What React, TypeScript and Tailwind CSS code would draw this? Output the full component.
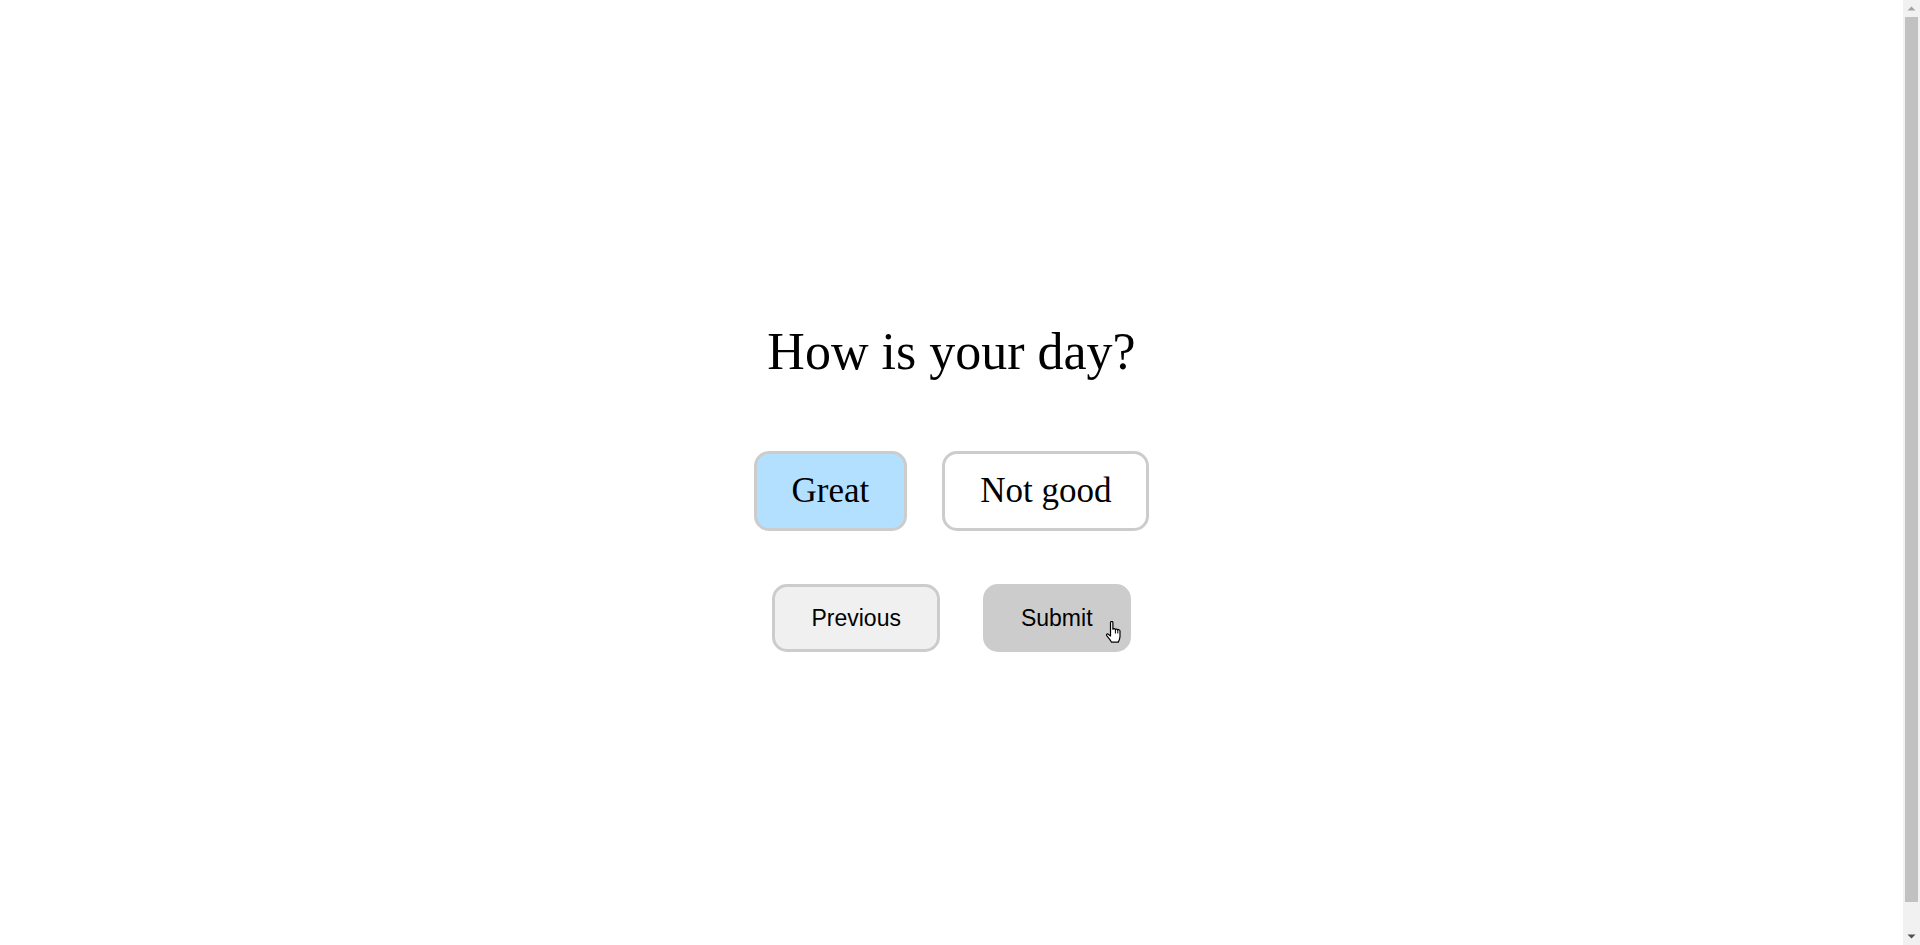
import React from "react";

function HandCursor() {
  return (
    <svg
      width="18"
      height="24"
      viewBox="0 0 18 24"
      className="absolute pointer-events-none"
      style={{ left: 119, top: 34 }}
    >
      <path
        d="M5.5 1.8 C5.5 0.9 6.1 0.5 6.7 0.5 C7.3 0.5 7.9 0.9 7.9 1.8 V8.2 C8.3 7.3 10.2 7.3 10.4 8.6 C10.7 7.8 12.6 7.8 12.8 9.1 C13.1 8.4 15 8.5 15 10.1 V15.6 C15 18 14 19.6 13.2 21.2 H6.6 C5.6 19.6 3.4 16.6 1.9 14.9 C1.1 13.9 1.9 12.4 3.1 13.1 L5.5 15 Z"
        fill="white"
        stroke="black"
        strokeWidth="1.2"
        strokeLinejoin="round"
      />
      <path d="M10.4 8.6 V12.5 M12.8 9.1 V12.5" stroke="black" strokeWidth="1" fill="none" />
    </svg>
  );
}

function Scrollbar() {
  return (
    <div className="w-[17px] h-[945px] bg-[#f1f1f1] flex flex-col shrink-0">
      <div className="h-[17px] flex items-center justify-center">
        <svg width="9" height="5" viewBox="0 0 9 5">
          <path d="M0.5 4.5 L4.5 0.5 L8.5 4.5 Z" fill="#a3a3a3" />
        </svg>
      </div>
      <div className="flex-1 px-[2px] pb-[26px]">
        <div className="h-full bg-[#c1c1c1]" />
      </div>
      <div className="h-[17px] flex items-center justify-center">
        <svg width="9" height="5" viewBox="0 0 9 5">
          <path d="M0.5 0.5 L8.5 0.5 L4.5 4.5 Z" fill="#505050" />
        </svg>
      </div>
    </div>
  );
}

export default function App() {
  return (
    <div className="h-[945px] w-full bg-white flex overflow-hidden">
      <main className="flex-1 pt-[29px] flex flex-col items-center justify-center">
        <h1
          className="text-[52px] leading-[1.15] text-black font-normal"
          style={{ fontFamily: '"Liberation Serif", "Times New Roman", serif' }}
        >
          How is your day?
        </h1>
        <div
          className="mt-[69px] flex gap-[35px]"
          style={{ fontFamily: '"Liberation Serif", "Times New Roman", serif' }}
        >
          <button className="border-[3px] border-[#cccccc] bg-[#b3e0ff] rounded-[15px] px-[35px] py-[17px] text-[35px] leading-[40px] text-black">
            Great
          </button>
          <button className="border-[3px] border-[#cccccc] bg-white rounded-[15px] px-[35px] py-[17px] text-[35px] leading-[40px] text-black">
            Not good
          </button>
        </div>
        <div
          className="mt-[53px] flex gap-[43px]"
          style={{ fontFamily: '"Liberation Sans", Arial, sans-serif' }}
        >
          <button className="border-[3px] border-[#cccccc] bg-[#f0f0f0] rounded-[15px] px-[36px] py-[18px] text-[23px] leading-[26px] text-black">
            Previous
          </button>
          <button className="relative border-[3px] border-[#cccccc] bg-[#cccccc] rounded-[15px] px-[35px] py-[18px] text-[23px] leading-[26px] text-black">
            Submit
            <HandCursor />
          </button>
        </div>
      </main>
      <Scrollbar />
    </div>
  );
}
